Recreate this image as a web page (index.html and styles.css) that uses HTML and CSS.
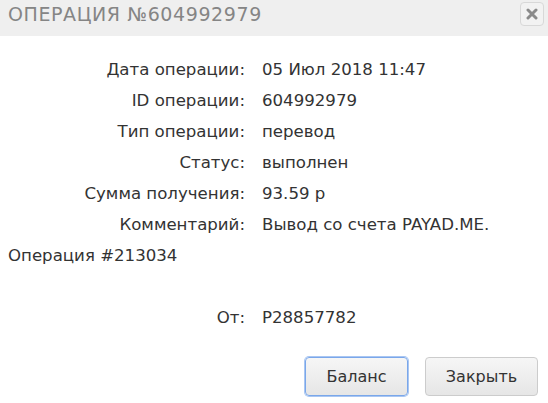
FILE: index.html
```html
<!DOCTYPE html>
<html lang="ru">
<head>
<meta charset="utf-8">
<title>Операция №604992979</title>
<link rel="stylesheet" href="styles.css">
</head>
<body>
<div class="dialog">
  <div class="dialog-header">
    <div class="dialog-title">ОПЕРАЦИЯ №604992979</div>
    <button class="close-btn" type="button" aria-label="Закрыть">
      <svg width="12" height="12" viewBox="0 0 12 12"><path d="M2 2 L10 10 M10 2 L2 10" stroke="#8a8a8a" stroke-width="3" stroke-linecap="round"/></svg>
    </button>
  </div>
  <div class="dialog-body">
    <div class="row"><span class="label">Дата операции:</span>05 Июл 2018 11:47</div>
    <div class="row"><span class="label">ID операции:</span>604992979</div>
    <div class="row"><span class="label">Тип операции:</span>перевод</div>
    <div class="row"><span class="label">Статус:</span>выполнен</div>
    <div class="row"><span class="label">Сумма получения:</span>93.59 р</div>
    <div class="row"><span class="label">Комментарий:</span>Вывод со счета PAYAD.ME.</div>
    <div class="row">Операция #213034</div>
    <div class="row empty"></div>
    <div class="row"><span class="label">От:</span>P28857782</div>
  </div>
  <div class="dialog-footer">
    <button class="btn btn-focus" type="button">Баланс</button>
    <button class="btn btn-close" type="button">Закрыть</button>
  </div>
</div>
</body>
</html>
```

FILE: styles.css
```css
html, body {
  margin: 0;
  padding: 0;
  background: #ffffff;
}
body {
  font-family: "DejaVu Sans", "Liberation Sans", sans-serif;
  color: #333333;
}
.dialog {
  width: 548px;
  height: 403px;
  display: flex;
  flex-direction: column;
}
.dialog-header {
  height: 36px;
  background: #efefef;
  display: flex;
  align-items: flex-start;
  justify-content: space-between;
  padding: 0 4px 0 8px;
}
.dialog-title {
  font-family: "DejaVu Sans", sans-serif;
  font-size: 19px;
  line-height: 28px;
  letter-spacing: 0.6px;
  color: #858585;
}
.close-btn {
  margin-top: 2px;
  width: 24px;
  height: 24px;
  padding: 0;
  border: 1px solid #d8d8d8;
  border-radius: 4px;
  background: #f2f2f2;
  display: flex;
  align-items: center;
  justify-content: center;
}
.dialog-body {
  padding: 18px 8px 0 8px;
  font-size: 16.6px;
  line-height: 31px;
}
.row {
  min-height: 31px;
}
.label {
  display: inline-block;
  width: 237px;
  padding-right: 17px;
  text-align: right;
}
.dialog-footer {
  margin-top: 24px;
  display: flex;
  justify-content: flex-end;
  gap: 17px;
  padding-right: 10px;
}
.btn {
  height: 39px;
  padding: 0 18px;
  font-family: "DejaVu Sans", sans-serif;
  font-size: 16px;
  color: #333333;
  border: 1px solid #cccccc;
  border-radius: 4px;
  background: linear-gradient(#f6f6f6, #e6e6e6);
}
.btn-focus {
  width: 103px;
  border-color: #7aa7ea;
  box-shadow: 0 0 0 1px #a9c6f2;
}
.btn-close {
  width: 113px;
}
```
